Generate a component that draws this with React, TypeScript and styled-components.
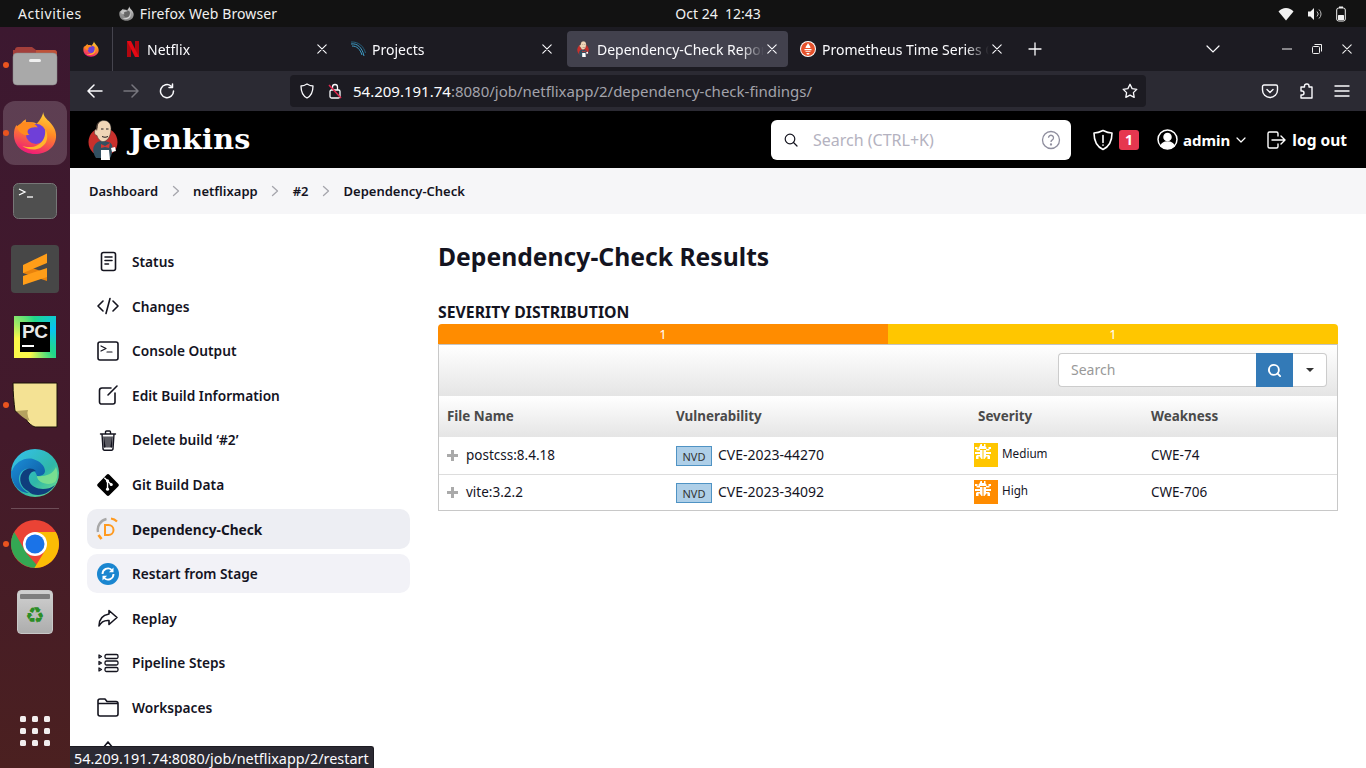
import React from 'react';
import styled, { createGlobalStyle } from 'styled-components';
import { Search as SearchIcon } from 'lucide-react';

const SANS = `"Noto Sans", "Open Sans", "Liberation Sans", sans-serif`;

const Global = createGlobalStyle`
  html, body { margin: 0; padding: 0; background: #fff; overflow: hidden; }
  * { box-sizing: border-box; }
  body { font-family: ${SANS}; }
`;

const Screen = styled.div`
  position: relative; width: 1366px; height: 768px; overflow: hidden;
  display: flex; flex-direction: column; background: #fff;
`;

/* ---------- GNOME top bar ---------- */
const TopBar = styled.header`
  height: 27px; flex: none; background: #121212; color: #f0f0f0;
  display: grid; grid-template-columns: 1fr auto 1fr; align-items: center;
  font-size: 14px; padding: 0 0 0 18px;
`;
const TopLeft = styled.div`display: flex; align-items: center;`;
const Activities = styled.span`letter-spacing: .55px;`;
const AppName = styled.span`display: flex; align-items: center; gap: 6px; margin-left: 37px; letter-spacing: .1px;`;
const Clock = styled.div`font-size: 14px; white-space: pre; margin-left: 52px;`;
const Tray = styled.div`display: flex; align-items: center; justify-content: flex-end; gap: 13px; padding-right: 20px;`;

/* ---------- body ---------- */
const Desk = styled.div`flex: 1; min-height: 0; display: flex;`;

const Dock = styled.nav`
  width: 70px; flex: none; display: flex; flex-direction: column; align-items: center;
  gap: 4px; padding-top: 6px;
  background: linear-gradient(180deg, #3c1830 0%, #431a2b 55%, #4b2020 100%);
`;
const DockItem = styled.div<{ $active?: boolean; $running?: boolean }>`
  position: relative; width: 64px; height: 64px; flex: none; border-radius: 12px;
  display: flex; align-items: center; justify-content: center;
  background: ${p => (p.$active ? 'rgba(255,255,255,.17)' : 'transparent')};
  &::before {
    content: ''; display: ${p => (p.$running ? 'block' : 'none')};
    position: absolute; left: 0; top: 29px; width: 6px; height: 6px; border-radius: 50%;
    background: #e9541f;
  }
`;
const DockRule = styled.div`width: 48px; height: 1px; background: rgba(255,255,255,.22); margin: -1px 0 -1px;`;
const AppGrid = styled.div`
  margin-top: auto; margin-bottom: 22px; display: grid;
  grid-template-columns: repeat(3, 6px); gap: 6px;
  span { width: 6px; height: 6px; background: #f2eeee; border-radius: 1.5px; }
`;

const Browser = styled.div`flex: 1; min-width: 0; display: flex; flex-direction: column;`;

const TabStrip = styled.div`
  height: 44px; flex: none; background: #1c1b22; display: flex; align-items: center;
  color: #fbfbfe; font-size: 14px;
`;
const FirefoxView = styled.div`
  width: 43px; height: 44px; flex: none; display: flex; align-items: center; justify-content: center;
  border-right: 1px solid #45444e; margin-right: 4px; padding-right: 1px;
`;
const Tab = styled.div<{ $active?: boolean }>`
  position: relative; width: 221px; height: 36px; flex: none; margin-right: 4px;
  display: flex; align-items: center; padding-left: 8px; gap: 6px; border-radius: 4px;
  background: ${p => (p.$active ? '#42414d' : 'transparent')};
`;
const TabIcon = styled.div`width: 16px; height: 16px; flex: none; display: flex; align-items: center; justify-content: center;`;
const TabTitle = styled.span`
  flex: 1; min-width: 0; overflow: hidden; white-space: nowrap; margin-right: 24px;
  -webkit-mask-image: linear-gradient(90deg, #000 86%, transparent 100%);
  mask-image: linear-gradient(90deg, #000 86%, transparent 100%);
`;
const TabClose = styled.div`
  position: absolute; right: 11px; top: 13px; width: 10px; height: 10px; display: flex;
`;
const StripEnd = styled.div`
  flex: 1; display: flex; align-items: center; padding-left: 11px;
`;
const Spacer = styled.div`flex: 1;`;
const WinControls = styled.div`display: flex; align-items: center; gap: 20px; padding-right: 14px;`;

const NavBar = styled.div`
  height: 40px; flex: none; background: #2b2a33; display: flex; align-items: center;
  padding-left: 17px; color: #fbfbfe;
`;
const NavButtons = styled.div`display: flex; align-items: center; gap: 20px; width: 203px;`;
const UrlBar = styled.div`
  width: 856px; height: 32px; background: #1c1b22; border-radius: 4px;
  display: flex; align-items: center; padding: 0 8px 0 9px; font-size: 15px; flex: none;
`;
const UrlIcons = styled.div`display: flex; align-items: center; gap: 13px; margin-right: 11px;`;
const UrlHost = styled.span`color: #fbfbfe;`;
const UrlRest = styled.span`color: #a3a3ab;`;
const UrlText = styled.div`flex: 1; white-space: nowrap;`;
const NavRight = styled.div`display: flex; align-items: center; gap: 18px; margin-left: 115px;`;

/* ---------- Jenkins ---------- */
const JenkinsHeader = styled.div`
  height: 57px; flex: none; background: #000; color: #fff; display: flex; align-items: center;
  padding: 0 20px 0 18px;
`;
const Brand = styled.div`display: flex; align-items: center; gap: 11px; width: 683px; flex: none;`;
const BrandName = styled.span`
  font-family: "DejaVu Serif", "Liberation Serif", serif; font-weight: 700; font-size: 28.6px; letter-spacing: .2px;
  margin-top: -2px;
`;
const HeadSearch = styled.div`
  width: 300px; height: 40px; background: #fff; border-radius: 6px; display: flex; align-items: center;
  padding: 0 10px 0 13px; color: #b4b2c0; font-size: 16px; flex: none;
`;
const HeadSearchText = styled.span`flex: 1; margin-left: 15px;`;
const HeadActions = styled.div`display: flex; align-items: center; margin-left: 21px; font-size: 15px; font-weight: 700; white-space: nowrap; flex: none;`;
const Badge = styled.span`
  width: 20px; height: 20px; border-radius: 3px; background: #e6374f; color: #fff; margin-left: 5px;
  display: flex; align-items: center; justify-content: center; font-size: 14px; font-weight: 700;
`;
const HeadLink = styled.span<{ $ml: number }>`display: flex; align-items: center; gap: 5px; margin-left: ${p => p.$ml}px;`;
const LogOutText = styled.span`margin-left: 1px; font-size: 15.5px;`;

const Crumbs = styled.div`
  height: 46px; flex: none; background: #f6f6f8; display: flex; align-items: center; padding-left: 19px;
  font-size: 13px; font-weight: 600; color: #14141f;
`;
const CrumbSep = styled.span`width: 35px; display: flex; justify-content: center;`;

const Page = styled.div`flex: 1; min-height: 0; display: flex; overflow: hidden;`;
const Side = styled.aside`
  width: 340px; flex: none; padding: 28px 0 0 17px; display: flex; flex-direction: column; gap: 5px;
`;
const SideItem = styled.div<{ $state?: 'active' | 'hover' }>`
  width: 323px; height: 39.55px; flex: none; border-radius: 10px; display: flex; align-items: center;
  padding-left: 10px; gap: 13px; font-size: 13.7px; color: #14141f;
  background: ${p => (p.$state === 'active' ? '#edeef3' : p.$state === 'hover' ? '#f2f2f7' : 'transparent')};
  font-weight: ${p => (p.$state === 'active' ? 700 : 600)};
`;
const SideIcon = styled.div`width: 22px; height: 22px; flex: none; display: flex; align-items: center; justify-content: center;`;

const Main = styled.main`flex: 1; min-width: 0; padding: 27px 28px 0 28px;`;
const Title = styled.h1`margin: 0; font-size: 24.7px; line-height: 32px; font-weight: 700; color: #14141f;`;
const SubTitle = styled.h2`
  margin: 28px 0 0; font-size: 15.8px; line-height: 22px; font-weight: 700; color: #14141f; height: 23px;
`;
const Bar = styled.div`display: flex; height: 20px; border-radius: 4px 4px 0 0; overflow: hidden;`;
const BarPart = styled.div<{ $c: string }>`
  flex: 1; background: ${p => p.$c}; color: #fff; font-size: 13px; line-height: 20px; text-align: center;
`;
const Panel = styled.div`border: 1px solid #c8c8c8; border-top: 0; width: 900px;`;
const Toolbar = styled.div`
  height: 52px; padding: 8px 10px 0 0; display: flex; justify-content: flex-end; border-top: 1px solid #c4c4c4;
  background: linear-gradient(180deg, #fff 0%, #e5e5e5 100%);
`;
const SearchInput = styled.div`
  width: 198px; height: 34px; border: 1px solid #ccc; border-right: 0; border-radius: 4px 0 0 4px; background: #fff;
  color: #999; font-size: 14px; line-height: 32px; padding-left: 12px;
`;
const SearchBtn = styled.div`
  width: 37px; height: 34px; background: #337ab7; display: flex; align-items: center; justify-content: center;
`;
const CaretBtn = styled.div`
  width: 34px; height: 34px; background: #fff; border: 1px solid #ccc; border-left: 0; border-radius: 0 4px 4px 0;
  display: flex; align-items: center; justify-content: center;
  &::after { content: ''; border: 4px solid transparent; border-top-color: #333; border-bottom: 0; }
`;
const Table = styled.table`
  width: 898px; border-collapse: collapse; table-layout: fixed; font-size: 13.5px; color: #14141f;
`;
const Th = styled.th<{ $w: number; $pl?: number }>`
  width: ${p => p.$w}px; height: 41px; text-align: left; padding: 0 0 1px ${p => p.$pl ?? 9}px; font-size: 13.4px; font-weight: 700; color: #4a4a4a;
  background: linear-gradient(180deg, #fff 0%, #e5e5e5 100%);
`;
const Tr = styled.tr`
  height: 37px; &:not(:last-child) { border-bottom: 1px solid #ddd; }
  &:last-child { height: 36px; }
`;
const Td = styled.td<{ $pl?: number }>`padding: 0 0 0 ${p => p.$pl ?? 9}px; white-space: nowrap;`;
const CellRow = styled.div<{ $gap: number }>`display: flex; align-items: center; gap: ${p => p.$gap}px;`;
const Nvd = styled.span`
  width: 36px; height: 20px; background: #aecfe8; border: 1px solid #4f93c4; color: #333;
  font-size: 11px; display: flex; align-items: center; justify-content: center; margin: 1px 0 -1px;
`;
const Cve = styled.span`font-size: 14px; margin: -1px 0 1px;`;
const SevText = styled.span`font-size: 11.7px; margin: -2px 0 2px;`;

const StatusTip = styled.div`
  position: absolute; left: 70px; bottom: 0; height: 22px; padding: 0 4px; background: #2b2a33; color: #fbfbfe;
  border: 1px solid #1c1b22; border-bottom: 0; border-left: 0; border-radius: 0 3px 0 0;
  font-size: 14.4px; line-height: 23px; white-space: nowrap;
`;

/* ---------- icons ---------- */
const S: React.FC<{ s?: number; c?: string; sw?: number; children: React.ReactNode }> = ({ s = 16, c = 'currentColor', sw = 1.5, children }) => (
  <svg width={s} height={s} viewBox={`0 0 ${s} ${s}`} fill="none" stroke={c} strokeWidth={sw} strokeLinecap="round" strokeLinejoin="round">{children}</svg>
);

const Firefox: React.FC<{ s: number; grey?: boolean; id: string }> = ({ s, grey, id }) => (
  <svg width={s} height={s} viewBox="0 0 48 48">
    <defs>
      <linearGradient id={id} x1="0.7" y1="0" x2="0.4" y2="1">
        <stop offset="0" stopColor={grey ? '#dcdcdc' : '#ffd43a'} />
        <stop offset=".45" stopColor={grey ? '#a0a0a0' : '#ff8a25'} />
        <stop offset="1" stopColor={grey ? '#808080' : '#ee1a78'} />
      </linearGradient>
    </defs>
    <path fill={`url(#${id})`} d="M33 1c0 4 3 7 6 10 5 5 8 10 8 16 0 12-10 20-23 20S1 38 1 26c0-5 1-8 3-11 0 2 1 3 2 4 1-4 4-8 8-10 0 2 0 3 1 4 3-1 8-1 11 1 2-3 6-7 7-13z" />
    <circle cx="25" cy="25" r="11" fill={grey ? '#666' : '#6f3fd8'} />
    <path fill={grey ? '#c2c2c2' : '#ff8b1f'} d="M4 17c3-3 7-5 11-5 5 0 10 2 12 6-4-1-8 0-10 2s-1 5 1 6c-6 2-12-2-14-9z" />
    <path fill={grey ? '#d2d2d2' : '#ffb52b'} d="M35 20c3 4 3 10 1 14-3 5-8 8-14 8-5 0-8-1-12-4 5 2 12 2 17-1 6-3 9-10 8-17z" />
  </svg>
);
const Folder = () => (
  <svg width="46" height="42" viewBox="0 0 46 42">
    <path fill="#a33f3b" d="M3 6a3 3 0 0 1 3-3h14l4 3h18a3 3 0 0 1 3 3v10H1V6z" />
    <path fill="#c5583a" d="M24 6h18a3 3 0 0 1 3 3v6H24z" opacity=".8" />
    <rect x="1" y="9" width="44" height="32" rx="4" fill="#a9a9a9" stroke="#8b8b8b" strokeWidth=".5" />
    <rect x="17" y="15" width="12" height="3" rx="1.5" fill="#f0f0f0" />
  </svg>
);
const TerminalApp = () => (
  <svg width="44" height="36" viewBox="0 0 44 36">
    <rect x=".5" y=".5" width="43" height="35" rx="5" fill="#4f4f4f" stroke="#777" />
    <path d="M6 6l6 3-6 3" fill="none" stroke="#fff" strokeWidth="1.300" />
    <path d="M14 14h6" stroke="#fff" strokeWidth="1.300" />
  </svg>
);
const Sublime = () => (
  <svg width="48" height="48" viewBox="0 0 48 48">
    <rect width="48" height="48" rx="4" fill="#474747" />
    <path fill="#e8820c" d="M12 20l24 8v8L12 28z" />
    <path fill="#ff9d18" d="M12 20 36 8.500V18L12 28z" />
    <path fill="#ff9d18" d="M12 31l24-8v9L12 40z" />
  </svg>
);
const PcTile = styled.div`
  width: 42px; height: 42px; padding: 6px; display: flex;
  background: conic-gradient(from 200deg at 55% 45%, #fcf84a 0deg, #fcf84a 60deg, #21d789 150deg, #07c3f2 230deg, #21d789 300deg, #fcf84a 360deg);
`;
const PcInner = styled.div`flex: 1; background: #000; padding: 0 0 0 2px; display: flex; flex-direction: column;`;
const PcWord = styled.span`
  font-family: "Liberation Sans", sans-serif; color: #e8e8e8; font-weight: 700; font-size: 19px; line-height: 20px; letter-spacing: -.3px;
`;
const PcDash = styled.span`width: 12px; height: 2px; background: #fff; margin-top: 3px;`;
const PyCharm = () => (
  <PcTile><PcInner><PcWord>PC</PcWord><PcDash /></PcInner></PcTile>
);
const Notes = () => (
  <svg width="48" height="48" viewBox="0 0 48 48">
    <path fill="#f4e294" stroke="#1a1208" strokeWidth="1" d="M2 2h44v44H24c-3-1-7-4-9-8-3-4-7-6-11-8-1-8-2-18-2-28z" />
    <path fill="#b5a25f" d="M5 30l12-1c-1 4 0 7 2 11-6-2-10-6-14-10z" />
    <path fill="#f4e294" d="M17 29c-1 4 0 8 3 12l5 4c-4-6-6-11-8-16z" />
  </svg>
);
const Edge = () => (
  <svg width="48" height="48" viewBox="0 0 48 48">
    <defs>
      <linearGradient id="e1" x1="0" y1="0" x2="1" y2="1"><stop offset="0" stopColor="#35c1f1" /><stop offset=".6" stopColor="#2fb8a8" /><stop offset="1" stopColor="#75e08a" /></linearGradient>
      <linearGradient id="e2" x1="0" y1="0" x2="1" y2="1"><stop offset="0" stopColor="#1b8fd8" /><stop offset="1" stopColor="#0c4f96" /></linearGradient>
    </defs>
    <circle cx="24" cy="24" r="24" fill="url(#e1)" />
    <path fill="url(#e2)" d="M1 22c3-9 13-14 21-12 7 2 12 7 12 12 0 3-3 5-8 5-1-5-6-8-11-7-7 2-9 10-5 17 2 3 5 6 8 7-10 0-18-9-18-22z" />
    <path fill="#0f3e7d" d="M17 42c-7-3-10-12-6-18 3-5 10-6 14-2-5 0-8 4-7 9 1 6 8 9 14 9 4 0 8-1 12-4-4 6-10 10-17 10-4 0-7-1-10-4z" />
    <path fill="#7ee08f" d="M26 27c6 1 16-1 19-9 2 5 2 11-1 15-4 3-11 2-14 0-2-1-4-3-4-6z" opacity=".9" />
  </svg>
);
const Chrome = () => (
  <svg width="48" height="48" viewBox="0 0 48 48">
    <circle cx="24" cy="24" r="24" fill="#ea4335" />
    <path fill="#34a853" d="M3.200 12 16 34l12 13.600C14 50 0 38 0 24c0-4 1-8 3.200-12z" />
    <path fill="#fbbc05" d="M24 12h20.800c2 3.500 3.200 7.700 3.200 12 0 13-10.700 24-24 24h-.600L34.400 30z" />
    <circle cx="24" cy="24" r="12" fill="#fff" />
    <circle cx="24" cy="24" r="9.500" fill="#1a73e8" />
  </svg>
);
const TrashBin = styled.div`
  width: 36px; height: 44px; border-radius: 4px; background: linear-gradient(180deg, #d0d0d0, #adadad);
  border: 1px solid #c8c8c8; padding: 3px; display: flex; flex-direction: column; align-items: center;
`;
const TrashLid = styled.div`width: 30px; height: 6px; background: #7e7e7e; border-radius: 1px;`;
const Recycle = styled.div`color: #2c8d26; font-family: "DejaVu Sans", sans-serif; font-size: 22px; line-height: 28px; margin-top: 3px;`;
const Trash = () => (
  <TrashBin><TrashLid /><Recycle>♻</Recycle></TrashBin>
);

const JenkinsLogo: React.FC<{ s: number }> = ({ s }) => (
  <svg width={s} height={s * 40 / 30} viewBox="0 0 30 40">
    <circle cx="15" cy="22" r="14.500" fill="#c8302c" />
    <path fill="#335061" d="M6 26c2-4 5-5 8-5 4 0 9 1 10 4 1 4 0 10-2 13H8C6 35 4 30 6 26z" />
    <path fill="#f0d6b7" stroke="#3a3a3a" strokeWidth=".5" d="M9 8c0-5 3-7.500 7-7.500s7 3 7 8c0 5-2 12-7 13-4 .5-6-3-7-6-1.500 0-2.500-1.500-2.500-3.500 0-2 1.500-3 2.500-4z" />
    <path fill="#4a3a30" d="M8 9c0-5 2-7 4-8-2 2-2.500 4-2.500 7l-.5 3z" />
    <path fill="#d33833" d="M13 24l4 2 5-3-1 5-4-1-4 1z" />
    <path fill="#fff" d="M13 30h8l1 10h-9zM23 28l4-1 1 4-4 1z" />
    <path fill="#231f20" d="M13 8.500h2.500v1H13zM18 8.500h2.500v1H18zM14 16c2 1 4 1 6 0v1c-2 1-4 1-6 0z" />
  </svg>
);
const Prometheus: React.FC = () => (
  <svg width="16" height="16" viewBox="0 0 16 16">
    <circle cx="8" cy="8" r="8" fill="#fff" />
    <circle cx="8" cy="8" r="7" fill="#e6522c" />
    <path fill="#fff" d="M8 2c.5 1.500 2.500 2.500 2.500 5H5.500C5.500 5 7.500 4 8 2zM4.500 8h7v1.200h-7zM5.500 10.200h5V11h-5zM6.500 12h3c0 1-.7 1.600-1.500 1.600S6.500 13 6.500 12z" />
  </svg>
);
const Bug: React.FC<{ bg: string }> = ({ bg }) => (
  <svg width="24" height="24" viewBox="0 0 24 24" style={{ display: 'block', flex: 'none' }}>
    <rect width="24" height="24" fill={bg} />
    <g transform="translate(1 1)" fill="#fff">
      <path d="M5.500 0h1.500v2h2V0h1.500v2.500l1 1V5h-8V3.500l1-1zM0 3h2.500v2H5v1.500H1.500V5H0zM16 3h-2.500v2H11v1.500h3.500V5H16zM0 8h5v2H0zM16 8h-5v2h5zM1 13v-1l1-1h3v1.500H3.500V15H1zM15 13v-1l-1-1h-3v1.500h1.500V15H15z" />
      <path d="M5 6h2.500v9h-1L5 13zM8.500 6H11v7l-1.500 2h-1z" />
    </g>
  </svg>
);
const X: React.FC<{ s?: number; c?: string }> = ({ s = 10, c = '#fbfbfe' }) => (
  <svg width={s} height={s} viewBox="0 0 10 10" stroke={c} strokeWidth="1.100" strokeLinecap="round"><path d="M.8.8l8.400 8.400M9.200.8.8 9.200" /></svg>
);
const Chevron: React.FC<{ c?: string }> = ({ c = '#a6a6ad' }) => (
  <svg width="8" height="12" viewBox="0 0 8 12" fill="none" stroke={c} strokeWidth="1.300" strokeLinecap="round" strokeLinejoin="round"><path d="M1.500 1.500 6.500 6l-5 4.500" /></svg>
);

const Ink = '#14141f';
const Sw = 1.6;
const sideIcons: Record<string, React.ReactNode> = {
  status: <S s={22} c={Ink} sw={Sw}><rect x="4.500" y="1.500" width="14" height="18" rx="2" /><path d="M8 6h7M8 9.500h7M8 13h3.500" /></S>,
  changes: <S s={22} c={Ink} sw={Sw}><path d="M6 6l-5 5 5 5M16 6l5 5-5 5M13 3.500 9 18.500" /></S>,
  console: <S s={22} c={Ink} sw={Sw}><rect x="1" y="2" width="20" height="18" rx="2" /><path d="M4 6l5 2.500L4 11M10 12h5" strokeWidth="1.200" /></S>,
  edit: <S s={22} c={Ink} sw={Sw}><path d="M14 4H5a2.500 2.500 0 0 0-2.500 2.500V18A2 2 0 0 0 5 20h11a2 2 0 0 0 2-2V9M11 11l9-9" /></S>,
  del: <S s={22} c={Ink} sw={1.400}><path d="M5 5l1 15a1.500 1.500 0 0 0 1.500 1.200h7A1.500 1.500 0 0 0 16 20l1-15M3.500 5h15M8.500 5V3a1 1 0 0 1 1-1h3a1 1 0 0 1 1 1v2M9 8v10M11 8v10M13 8v10M7 8l.5 10M15 8l-.5 10" /></S>,
  git: (
    <svg width="24" height="24" viewBox="0 0 24 24">
      <path fill="#000" d="M10.500.9a2.100 2.100 0 0 1 3 0l9.600 9.600a2.100 2.100 0 0 1 0 3l-9.600 9.600a2.100 2.100 0 0 1-3 0L.9 13.500a2.100 2.100 0 0 1 0-3z" />
      <path stroke="#fff" strokeWidth="1.500" d="M8 4l8 8M11.500 7.500v9" fill="none" />
      <circle cx="11.500" cy="7.500" r="1.700" fill="#fff" /><circle cx="11.500" cy="16.500" r="1.700" fill="#fff" /><circle cx="15.500" cy="11.500" r="1.700" fill="#fff" />
    </svg>
  ),
  dc: (
    <svg width="24" height="24" viewBox="0 0 24 24" fill="none" style={{ flex: 'none' }}>
      <path d="M2 15a11 11 0 0 1 8.500-13" stroke="#a8a8a8" strokeWidth="2.400" />
      <path d="M15 1.500a11 11 0 0 1 6 3" stroke="#ff9a1f" strokeWidth="2.200" />
      <path d="M2.500 18l3 4" stroke="#ff9a1f" strokeWidth="2.600" />
      <path d="M9 8h3.500a5 5 0 0 1 0 10H9z" stroke="#ff9a1f" strokeWidth="2" />
    </svg>
  ),
  restart: (
    <svg width="24" height="24" viewBox="0 0 24 24" fill="none">
      <circle cx="12" cy="12" r="12" fill="#1a86d0" />
      <path stroke="#fff" strokeWidth="2" d="M6 12a6 6 0 0 1 10-4.500M18 12a6 6 0 0 1-10 4.500" />
      <path fill="#fff" d="M18 5v5h-5zM6 19v-5h5z" />
    </svg>
  ),
  replay: <S s={22} c={Ink} sw={Sw}><path d="M12 3.500l8 7-8 7v-4C7 13 4 15 2 19c0-7 4-11 10-12z" /></S>,
  steps: <S s={22} c={Ink} sw={1.300}><rect x="8" y="2.500" width="13" height="4" rx="1.500" /><rect x="8" y="9" width="13" height="4" rx="1.500" /><rect x="8" y="15.500" width="13" height="4" rx="1.500" /><path d="M2 3l2.500 1.500L2 6zM2 9.500 4.500 11 2 12.500zM2 16l2.500 1.500L2 19z" /></S>,
  folder: <S s={22} c={Ink} sw={Sw}><path d="M1 5a2 2 0 0 1 2-2h5l2 2.500h9a2 2 0 0 1 2 2V18a2 2 0 0 1-2 2H3a2 2 0 0 1-2-2zM1 7.500h20" /></S>,
  more: <S s={22} c={Ink} sw={Sw}><path d="M11 1l5 6M11 1 6 7" /></S>,
};

const sideRows: { key: string; label: string; state?: 'active' | 'hover' }[] = [
  { key: 'status', label: 'Status' },
  { key: 'changes', label: 'Changes' },
  { key: 'console', label: 'Console Output' },
  { key: 'edit', label: 'Edit Build Information' },
  { key: 'del', label: 'Delete build ‘#2’' },
  { key: 'git', label: 'Git Build Data' },
  { key: 'dc', label: 'Dependency-Check', state: 'active' },
  { key: 'restart', label: 'Restart from Stage', state: 'hover' },
  { key: 'replay', label: 'Replay' },
  { key: 'steps', label: 'Pipeline Steps' },
  { key: 'folder', label: 'Workspaces' },
  { key: 'more', label: '' },
];

const rows = [
  { file: 'postcss:8.4.18', cve: 'CVE-2023-44270', sev: 'Medium', color: '#ffc600', cwe: 'CWE-74' },
  { file: 'vite:3.2.2', cve: 'CVE-2023-34092', sev: 'High', color: '#ff8c00', cwe: 'CWE-706' },
];

const App: React.FC = () => (
  <Screen>
    <Global />
    <TopBar>
      <TopLeft>
        <Activities>Activities</Activities>
        <AppName><Firefox s={15} grey id="ffg" />Firefox Web Browser</AppName>
      </TopLeft>
      <Clock>Oct 24  12:43</Clock>
      <Tray>
        <svg width="16" height="14" viewBox="0 0 16 14"><path fill="#f2f2f2" d="M8 13.500 .5 4.500C2.500 2.500 5 1 8 1s5.500 1.500 7.500 3.500z" /></svg>
        <svg width="16" height="14" viewBox="0 0 16 14" fill="none"><path fill="#f2f2f2" d="M1 4.500h2.500L7 1v12L3.500 9.500H1z" /><path stroke="#bbb" d="M10 4.500a3.500 3.500 0 0 1 0 5M12 2.500a6 6 0 0 1 0 9" /></svg>
        <svg width="10" height="16" viewBox="0 0 10 16" fill="none"><rect x=".7" y="2" width="8.600" height="13" rx="2" stroke="#f2f2f2" /><rect x="3" y=".5" width="4" height="1.500" fill="#f2f2f2" /><rect x="2" y="9" width="6" height="5" rx=".5" fill="#f2f2f2" /></svg>
      </Tray>
    </TopBar>
    <Desk>
      <Dock>
        <DockItem $running><Folder /></DockItem>
        <DockItem $active $running><Firefox s={44} id="ffa" /></DockItem>
        <DockItem><TerminalApp /></DockItem>
        <DockItem><Sublime /></DockItem>
        <DockItem><PyCharm /></DockItem>
        <DockItem $running><Notes /></DockItem>
        <DockItem><Edge /></DockItem>
        <DockRule />
        <DockItem $running><Chrome /></DockItem>
        <DockItem><Trash /></DockItem>
        <AppGrid>{Array.from({ length: 9 }, (_, i) => <span key={i} />)}</AppGrid>
      </Dock>
      <Browser>
        <TabStrip>
          <FirefoxView><Firefox s={16} id="ffb" /></FirefoxView>
          <Tab>
            <TabIcon><svg width="16" height="16" viewBox="0 0 16 16"><path fill="#b20710" d="M2 0h4v16H2zM10 0h4v16h-4z" /><path fill="#e50914" d="M2 0h4l8 16h-4z" /></svg></TabIcon>
            <TabTitle>Netflix</TabTitle><TabClose><X /></TabClose>
          </Tab>
          <Tab>
            <TabIcon><svg width="16" height="16" viewBox="0 0 16 16" fill="none" stroke="#3e9ec8" strokeWidth="1"><path d="M1 3c6-1 11 3 13 12M2 5c5 0 8 3 10 9" /><path stroke="#245f7c" d="M1 1c8-.5 13 5 14.500 11" /></svg></TabIcon>
            <TabTitle>Projects</TabTitle><TabClose><X /></TabClose>
          </Tab>
          <Tab $active>
            <TabIcon><JenkinsLogo s={12} /></TabIcon>
            <TabTitle>Dependency-Check Report</TabTitle><TabClose><X /></TabClose>
          </Tab>
          <Tab>
            <TabIcon><Prometheus /></TabIcon>
            <TabTitle>Prometheus Time Series Collection</TabTitle><TabClose><X /></TabClose>
          </Tab>
          <StripEnd>
            <svg width="14" height="14" viewBox="0 0 14 14" stroke="#fbfbfe" strokeWidth="1.300" strokeLinecap="round"><path d="M7 1v12M1 7h12" /></svg>
            <Spacer />
            <svg width="14" height="8" viewBox="0 0 14 8" fill="none" stroke="#fbfbfe" strokeWidth="1.200" strokeLinecap="round" style={{ marginRight: 62 }}><path d="M1 1l6 6 6-6" /></svg>
            <WinControls>
              <svg width="10" height="10" viewBox="0 0 10 10" stroke="#f0f0f0"><path d="M0 5h10" /></svg>
              <svg width="10" height="10" viewBox="0 0 10 10" fill="none" stroke="#f0f0f0"><rect x=".5" y="2.500" width="7" height="7" rx="1" /><path d="M2.500.5h7v7" /></svg>
              <X s={10} c="#f0f0f0" />
            </WinControls>
          </StripEnd>
        </TabStrip>
        <NavBar>
          <NavButtons>
            <S s={16} c="#fbfbfe"><path d="M15 8H1.500M7 2 1 8l6 6" /></S>
            <S s={16} c="#77767e"><path d="M1 8h13.500M9 2l6 6-6 6" /></S>
            <S s={16} c="#fbfbfe"><path d="M14.500 8A6.500 6.500 0 1 1 12 3M13.500 1v3.500H10" /></S>
          </NavButtons>
          <UrlBar>
            <UrlIcons>
              <S s={16} c="#fbfbfe" sw={1.300}><path d="M8 1c2 1.300 4 2 6 2 0 6-2 10-6 12C4 13 2 9 2 3c2 0 4-.7 6-2z" /></S>
              <svg width="14" height="16" viewBox="0 0 14 16" fill="none" stroke="#fbfbfe" strokeWidth="1.300"><rect x="2" y="7" width="10" height="8" rx="1.500" /><path d="M4.500 7V4a2.500 2.500 0 0 1 5 0v3" /><path d="M1 2l12 13" stroke="#e22850" strokeWidth="1.500" /></svg>
            </UrlIcons>
            <UrlText><UrlHost>54.209.191.74</UrlHost><UrlRest>:8080/job/netflixapp/2/dependency-check-findings/</UrlRest></UrlText>
            <S s={16} c="#fbfbfe" sw={1.300}><path d="M8 1.300l2.100 4.300 4.700.7-3.400 3.300.8 4.700L8 12.100l-4.200 2.200.8-4.700L1.200 6.300l4.700-.7z" /></S>
          </UrlBar>
          <NavRight>
            <S s={18} c="#fbfbfe" sw={1.400}><path d="M3 3h12a1.500 1.500 0 0 1 1.500 1.500V8a7.500 7.500 0 0 1-15 0V4.500A1.500 1.500 0 0 1 3 3z" /><path d="M6 7.500l3 3 3-3" /></S>
            <S s={18} c="#fbfbfe" sw={1.400}><path d="M10 2h-.5a2 2 0 0 0-2 2v1H4v4h1a2 2 0 0 1 0 4H4v3h11V5h-3V4a2 2 0 0 0-2-2z" /></S>
            <S s={18} c="#fbfbfe" sw={1.400}><path d="M2 4h14M2 9h14M2 14h14" /></S>
          </NavRight>
        </NavBar>
        <JenkinsHeader>
          <Brand><JenkinsLogo s={30} /><BrandName>Jenkins</BrandName></Brand>
          <HeadSearch>
            <S s={14} c="#14141f" sw={1.200}><circle cx="6" cy="6" r="4.800" /><path d="M9.500 9.500 13 13" /></S>
            <HeadSearchText>Search (CTRL+K)</HeadSearchText>
            <svg width="20" height="20" viewBox="0 0 20 20" fill="none" stroke="#8f8e9e" strokeWidth="1.300"><circle cx="10" cy="10" r="8.500" /><path d="M7.500 7.800a2.500 2.500 0 1 1 3.800 2.100c-.9.500-1.300 1-1.300 2" /><circle cx="10" cy="14.500" r=".5" /></svg>
          </HeadSearch>
          <HeadActions>
            <S s={22} c="#fff" sw={1.600}><path d="M11 1.500c3 1.500 6 2.500 9 2.500 0 8-2.500 13.500-9 16.500C4.500 17.500 2 12 2 4c3 0 6-1 9-2.500zM11 6.500v7M11 16v.2" /></S>
            <Badge>1</Badge>
            <HeadLink $ml={18}>
              <svg width="21" height="21" viewBox="0 0 21 21" fill="none" stroke="#fff" strokeWidth="1.500"><circle cx="10.500" cy="10.500" r="9.500" /><circle cx="10.500" cy="8" r="3.500" fill="#fff" /><path fill="#fff" d="M4 17c1-3 4-4 6.500-4s5.500 1 6.500 4c-3.500 3-9.500 3-13 0z" /></svg>
              <span>admin</span>
              <S s={12} c="#fff" sw={1.200}><path d="M2 4l4 4 4-4" /></S>
            </HeadLink>
            <HeadLink $ml={19}>
              <svg width="20" height="20" viewBox="0 0 20 20" fill="none" stroke="#fff" strokeWidth="1.400" strokeLinecap="round" strokeLinejoin="round"><path d="M12 6V3.500A1.500 1.500 0 0 0 10.500 2h-7A1.500 1.500 0 0 0 2 3.500v13A1.500 1.500 0 0 0 3.500 18h7a1.500 1.500 0 0 0 1.500-1.500V14M6 10h13M15 6l4 4-4 4" /></svg>
              <LogOutText>log out</LogOutText>
            </HeadLink>
          </HeadActions>
        </JenkinsHeader>
        <Crumbs>
          Dashboard<CrumbSep><Chevron /></CrumbSep>netflixapp<CrumbSep><Chevron /></CrumbSep>#2<CrumbSep><Chevron /></CrumbSep>Dependency-Check
        </Crumbs>
        <Page>
          <Side>
            {sideRows.map(r => (
              <SideItem key={r.key} $state={r.state}>
                <SideIcon>{sideIcons[r.key]}</SideIcon>{r.label}
              </SideItem>
            ))}
          </Side>
          <Main>
            <Title>Dependency-Check Results</Title>
            <SubTitle>SEVERITY DISTRIBUTION</SubTitle>
            <Bar><BarPart $c="#ff8c00">1</BarPart><BarPart $c="#ffc600">1</BarPart></Bar>
            <Panel>
              <Toolbar>
                <SearchInput>Search</SearchInput>
                <SearchBtn><SearchIcon size={15} color="#fff" strokeWidth={3} /></SearchBtn>
                <CaretBtn />
              </Toolbar>
              <Table>
                <thead>
                  <tr><Th $w={228} $pl={8}>File Name</Th><Th $w={302}>Vulnerability</Th><Th $w={173}>Severity</Th><Th $w={195}>Weakness</Th></tr>
                </thead>
                <tbody>
                  {rows.map(r => (
                    <Tr key={r.cve}>
                      <Td $pl={8}>
                        <CellRow $gap={8}>
                          <svg width="11" height="11" viewBox="0 0 11 11"><path fill="#aaa" d="M4 0h3v4h4v3H7v4H4V7H0V4h4z" /></svg>
                          {r.file}
                        </CellRow>
                      </Td>
                      <Td><CellRow $gap={6}><Nvd>NVD</Nvd><Cve>{r.cve}</Cve></CellRow></Td>
                      <Td $pl={5}><CellRow $gap={4}><Bug bg={r.color} /><SevText>{r.sev}</SevText></CellRow></Td>
                      <Td>{r.cwe}</Td>
                    </Tr>
                  ))}
                </tbody>
              </Table>
            </Panel>
          </Main>
        </Page>
      </Browser>
    </Desk>
    <StatusTip>54.209.191.74:8080/job/netflixapp/2/restart</StatusTip>
  </Screen>
);

export default App;
